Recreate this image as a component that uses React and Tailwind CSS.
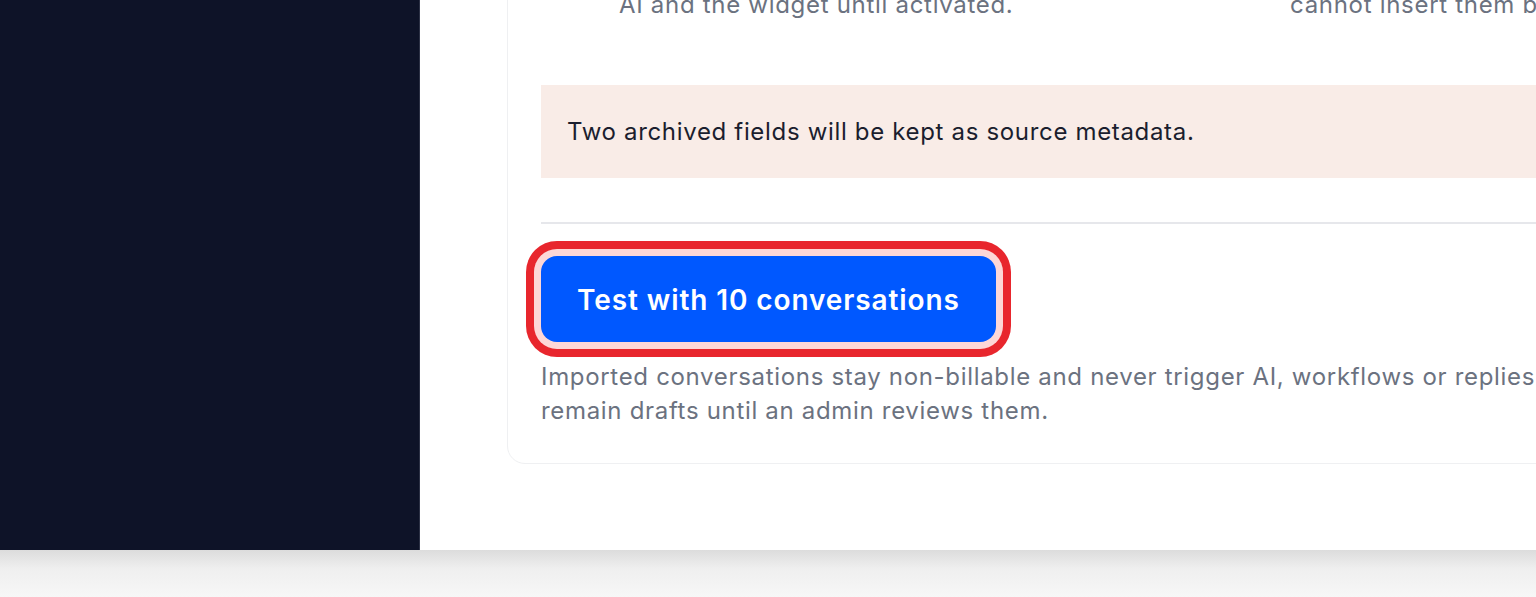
export default function App() {
  return (
    <div className="h-[597px] w-full overflow-hidden bg-[#f7f7f7] font-['Inter','Liberation_Sans',sans-serif] flex flex-col">
      <div className="h-[550px] flex shrink-0">
        <aside className="w-[420px] shrink-0 bg-[#0e1328] border-r border-[#2c3145]" />

        <main className="flex-1 bg-white overflow-hidden">
          <div className="ml-[87px] -mt-[100px] w-[1200px] border border-[#eff0f2] rounded-[18px] pt-[53px] px-[33px] pb-[35px]">
            {/* feature notes, mostly scrolled out of view */}
            <div className="grid grid-cols-[671px_1fr] text-[24px] leading-[34px] tracking-[0.7px] text-[#6b7280]">
              <div className="pl-[78px] whitespace-nowrap">
                <p>Drafts stay hidden from customers,</p>
                <p>AI and the widget until activated.</p>
              </div>
              <div className="pl-[78px] whitespace-nowrap">
                <p>Archived fields stay read-only; agents</p>
                <p>cannot insert them before review.</p>
              </div>
            </div>

            <div className="mt-[63px] h-[93px] bg-[#f9ece7] flex items-center px-[26px]">
              <p className="text-[24px] tracking-[0.67px] text-[#1b1e2e]">
                Two archived fields will be kept as source metadata.
              </p>
            </div>

            <div className="mt-[44px] h-[2px] bg-[#e6e7eb]" />

            <button
              type="button"
              className="mt-[32px] h-[86px] w-[455px] rounded-[16px] bg-[#0058ff] text-white text-[28px] font-semibold tracking-[0.9px] pt-[2px] shadow-[0_0_0_7px_#fdd7d7,0_0_0_15px_#e8262d]"
            >
              Test with 10 conversations
            </button>

            <div className="mt-[18px] text-[24px] leading-[34px] tracking-[0.68px] text-[#6b7280] whitespace-nowrap">
              <p>Imported conversations stay non-billable and never trigger AI, workflows or replies. Suggested replies</p>
              <p>remain drafts until an admin reviews them.</p>
            </div>
          </div>
        </main>
      </div>

      <div className="flex-1 bg-linear-to-b from-[#dcdcdc] via-[#efefef] via-40% to-[#f7f7f7]" />
    </div>
  )
}
